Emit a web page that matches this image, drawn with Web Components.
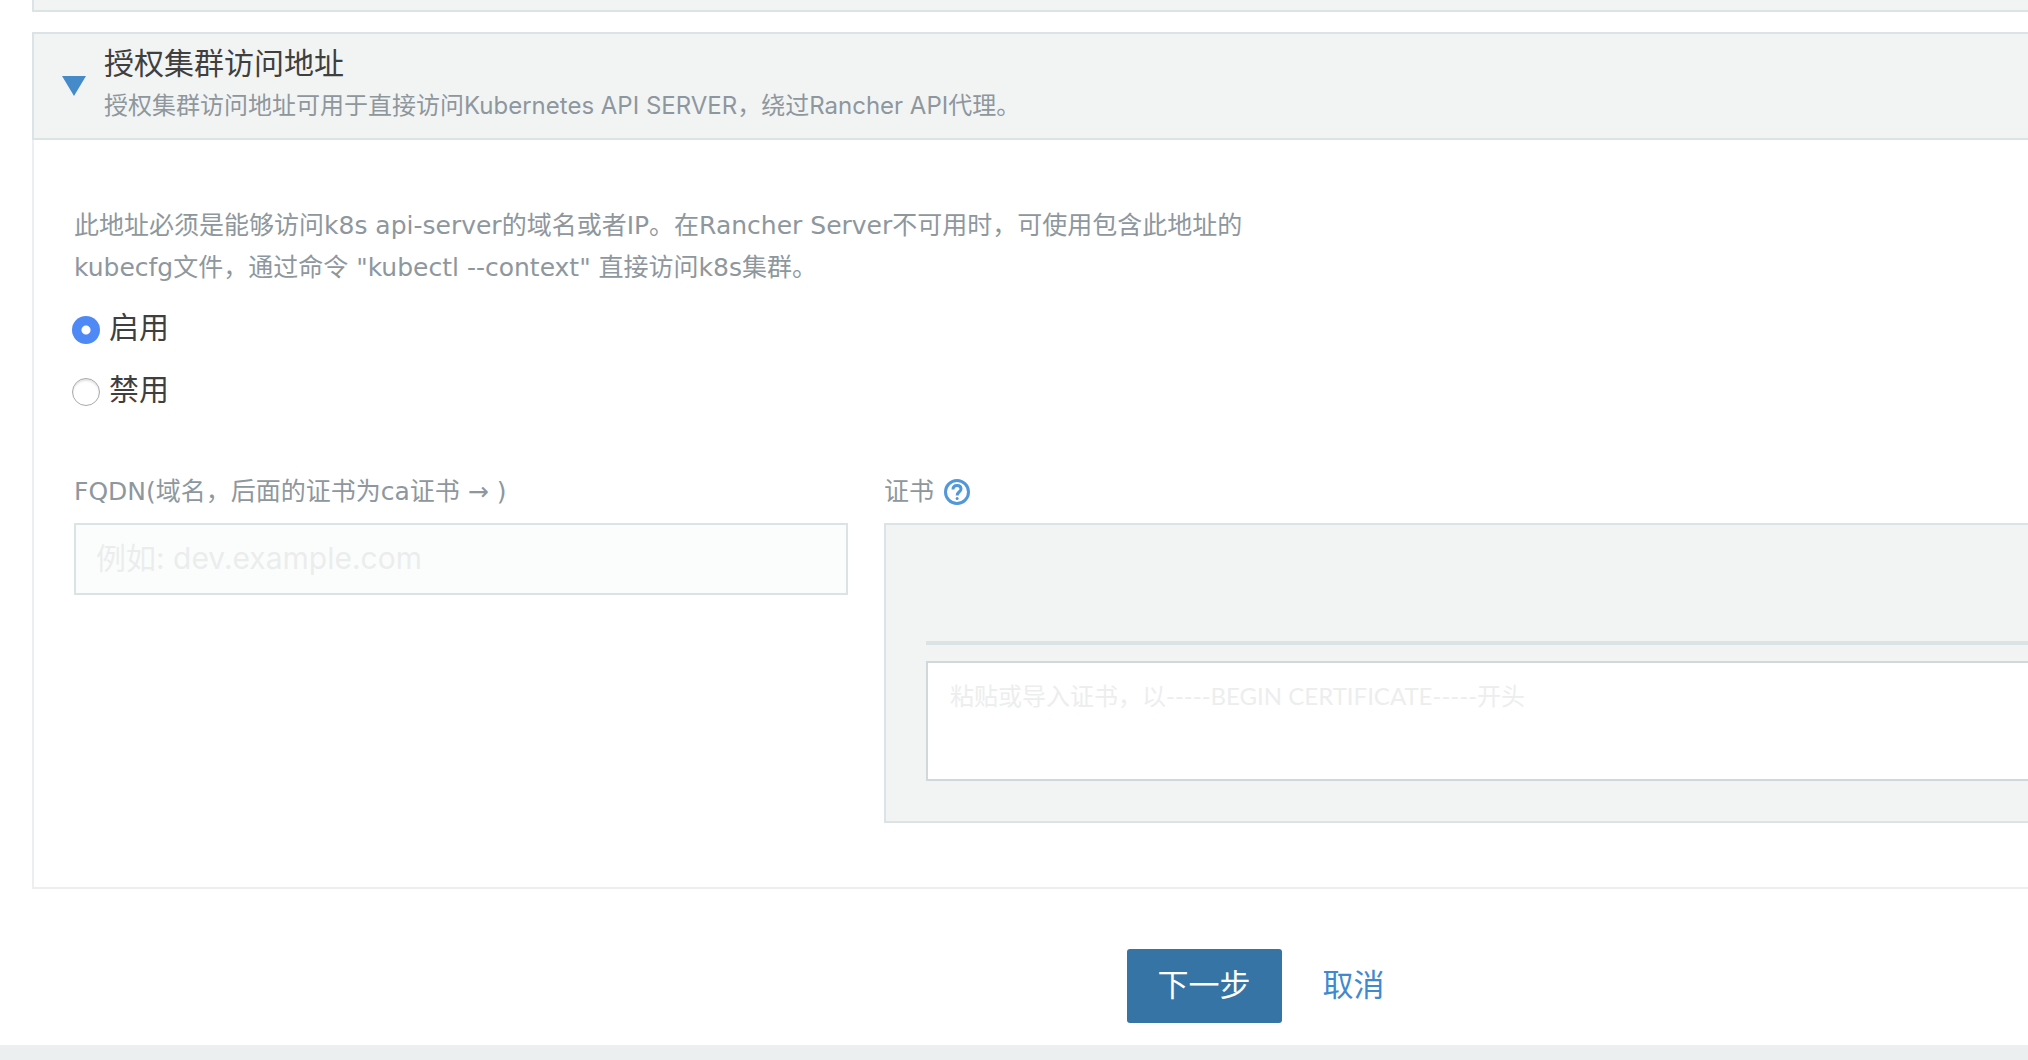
<!DOCTYPE html>
<html lang="zh-CN">
<head>
<meta charset="utf-8">
<title>授权集群访问地址</title>
<style>
html { background: #ebefef; }
body { margin: 0; font-family: "Open Sans", "Noto Sans CJK SC", sans-serif; color: #3f3f3f; font-size: 30px; }
</style>
</head>
<body>
<cluster-page></cluster-page>
<script>
const define = (name, html) => customElements.define(name, class extends HTMLElement {
  constructor() {
    super();
    this.attachShadow({ mode: 'open' }).innerHTML = html;
  }
});

define('accordion-panel', `
<style>
:host { display: block; }
header { display: flex; align-items: center; gap: 18px; box-sizing: border-box; min-height: 108px; padding: 0 28px; background: #f2f4f4; border: 2px solid #dce3e5; }
button { display: flex; padding: 0; border: 0; background: none; cursor: pointer; }
svg { display: block; width: 24px; height: 20px; fill: #468bc9; }
.heading { padding-bottom: 6px; }
h2 { margin: 0; font-size: 30px; line-height: 46px; font-weight: 400; }
p { margin: 0; font-family: Inter, "Noto Sans CJK SC", sans-serif; font-size: 24px; line-height: 40px; color: #8e979d; }
.body { padding: 65px 40px 64px; border: 2px solid #ebefef; border-top: 0; }
</style>
<header>
  <button type="button" aria-label="收起" aria-expanded="true"><svg viewBox="0 0 24 20"><path d="M0 0H24L12 20Z"/></svg></button>
  <div class="heading"><h2><slot name="title"></slot></h2><p><slot name="detail"></slot></p></div>
</header>
<div class="body"><slot></slot></div>`);

define('collapsed-edge', `
<style>:host { display: block; box-sizing: border-box; height: 12px; background: #f2f4f4; border: 2px solid #dce3e5; border-top: 0; }</style>`);

define('help-icon', `
<style>
:host { display: block; }
svg { display: block; width: 26px; height: 26px; fill: none; stroke: #5297d8; }
</style>
<svg viewBox="0 0 26 26" role="img" aria-label="帮助"><circle cx="13" cy="13" r="11.5" stroke-width="3"/><path d="M9 10.4C9 7.8 10.7 6.4 13.1 6.4S17 7.8 17 10C17 12.8 13.2 12.8 13.2 16.4" stroke-width="3"/><circle cx="13.1" cy="19.4" r="1.5" fill="#5297d8" stroke="none"/></svg>`);

define('access-options', `
<style>
:host { display: flex; flex-direction: column; gap: 18px; }
label { display: flex; align-items: center; gap: 9px; font-size: 30px; line-height: 44px; }
input { appearance: none; box-sizing: border-box; width: 28px; height: 28px; margin: 6px 0 0 -2px; border: 1px solid #a9a9a9; border-radius: 50%; background: #fff; box-shadow: inset 0 2px 2px #e4e4e4; }
input:checked { border: 0; background: radial-gradient(circle, #fff 0 4px, #4f89f6 5px); box-shadow: none; }
</style>
<label><input type="radio" name="access" checked>启用</label>
<label><input type="radio" name="access">禁用</label>`);

define('fqdn-field', `
<style>
:host { display: block; }
label { display: block; margin-bottom: 12px; font-family: "DejaVu Sans", "Noto Sans CJK SC", sans-serif; font-size: 25px; line-height: 38px; color: #8e979d; }
input { display: block; box-sizing: border-box; width: 100%; height: 72px; padding: 0 20px 2px; border: 2px solid #dce3e5; border-radius: 0; background: #fbfdfc; font-family: Inter, "Noto Sans CJK SC", sans-serif; font-size: 30px; }
input::placeholder { color: #ebeded; opacity: 1; }
</style>
<label for="fqdn">FQDN(域名，后面的证书为ca证书 → )</label>
<input id="fqdn" type="text" placeholder="例如: dev.example.com">`);

define('certificate-field', `
<style>
:host { display: block; }
.label { display: flex; align-items: center; gap: 10px; margin-bottom: 12px; font-family: "DejaVu Sans", "Noto Sans CJK SC", sans-serif; font-size: 25px; line-height: 38px; color: #8e979d; }
.box { padding: 116px 40px 40px; background: #f2f4f4; border: 2px solid #dce3e5; }
hr { height: 4px; margin: 0 0 16px; border: 0; background: #dce3e5; }
textarea { display: block; box-sizing: border-box; width: 100%; height: 120px; padding: 15px 22px; border: 2px solid #d0d8db; border-radius: 0; background: #fff; font-family: Lato, "Noto Sans CJK SC", sans-serif; font-size: 24px; line-height: 36px; resize: none; }
textarea::placeholder { color: #eceeee; opacity: 1; }
</style>
<div class="label"><label for="cert">证书</label><help-icon></help-icon></div>
<div class="box"><hr><textarea id="cert" placeholder="粘贴或导入证书，以-----BEGIN CERTIFICATE-----开头"></textarea></div>`);

define('form-actions', `
<style>
:host { display: flex; justify-content: center; gap: 10px; }
button, a { box-sizing: border-box; height: 74px; padding: 0 31px 4px; border: 0; border-radius: 3px; font: inherit; font-size: 31px; line-height: 70px; text-decoration: none; }
button { background: #3574a5; color: #fff; }
a { color: #4189cf; }
</style>
<button type="button">下一步</button><a href="#cancel">取消</a>`);

define('cluster-page', `
<style>
:host { display: block; overflow: hidden; background: #fff; }
main { box-sizing: border-box; width: calc(100% + 514px); padding: 0 32px 22px; }
accordion-panel { margin: 20px 0 60px; }
.note { width: 50%; margin: 0 0 16px; font-family: "DejaVu Sans", "Noto Sans CJK SC", sans-serif; font-size: 25px; line-height: 42px; color: #8e979d; }
.fields { display: grid; grid-template-columns: repeat(3, 1fr); gap: 36px; margin-top: 62px; }
certificate-field { grid-column: span 2; }
</style>
<main>
<collapsed-edge></collapsed-edge>
<accordion-panel>
  <span slot="title">授权集群访问地址</span>
  <span slot="detail">授权集群访问地址可用于直接访问Kubernetes API SERVER，绕过Rancher API代理。</span>
  <p class="note">此地址必须是能够访问k8s api-server的域名或者IP。在Rancher Server不可用时，可使用包含此地址的kubecfg文件，通过命令 "kubectl --context" 直接访问k8s集群。</p>
  <access-options></access-options>
  <div class="fields"><fqdn-field></fqdn-field><certificate-field></certificate-field></div>
</accordion-panel>
<form-actions></form-actions>
</main>`);
</script>
</body>
</html>
